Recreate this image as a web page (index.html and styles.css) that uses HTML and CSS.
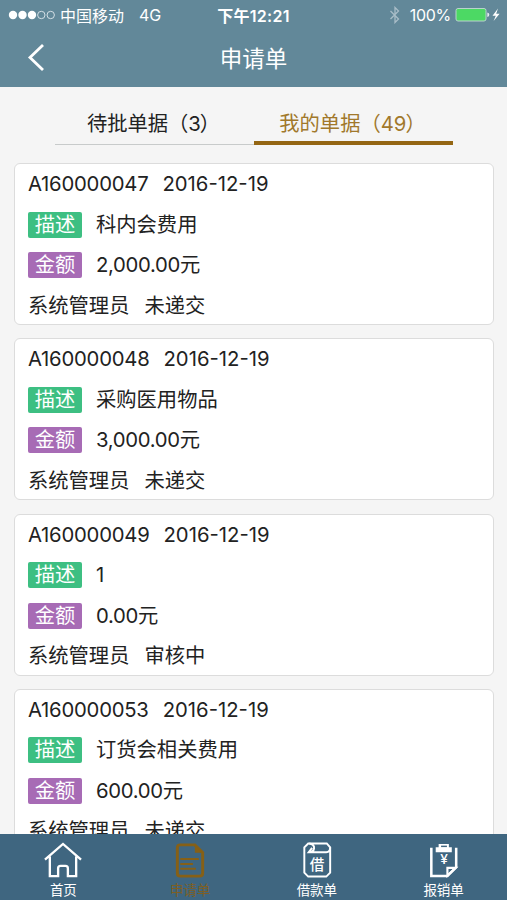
FILE: index.html
```html
<!DOCTYPE html>
<html lang="zh-CN">

<head>
  <meta charset="UTF-8">
  <meta name="viewport" content="width=device-width, initial-scale=1.0">
  <title>申请单</title>
  <link rel="stylesheet" href="styles.css">
</head>

<body>
  <header>
    <div class="status">
      <div class="carrier">
        <svg width="48" height="12" viewBox="0 0 48 12">
          <g fill="#fff">
            <circle cx="5" cy="6" r="4.2" />
            <circle cx="14.5" cy="6" r="4.2" />
            <circle cx="24" cy="6" r="4.2" />
          </g>
          <g fill="none" stroke="#d3dfe5">
            <circle cx="33.3" cy="6" r="3.7" />
            <circle cx="42.7" cy="6" r="3.7" />
          </g>
        </svg>
        <span class="operator">中国移动</span>
        <span class="network">4G</span>
      </div>
      <div class="time">下午12:21</div>
      <div class="power">
        <svg class="bluetooth" width="12" height="18" viewBox="0 0 12 18">
          <path d="M1.5 5l8 8L6 16.500v-15L9.500 5l-8 8" fill="none" stroke="#a9bdc8" stroke-width="1.3" />
        </svg>
        <span class="percent">100%</span>
        <svg width="46" height="16" viewBox="0 0 46 16">
          <rect x="1" y="1.5" width="30" height="12.5" rx="2" fill="#4cd964" stroke="#b9d3cd" />
          <path d="M32.3 5.5q2 .5 2 2.3t-2 2.3z" fill="#e4edf0" />
          <path d="M43 1.5l-5.5 7.2h3.3L38.6 14l6-7.2h-3.4z" fill="#fff" />
        </svg>
      </div>
    </div>
    <div class="title-bar">
      <a class="back" href="#">
        <svg width="18" height="28" viewBox="0 0 18 28">
          <path d="M16 2L3 14.500l13 12.500" fill="none" stroke="#fff" stroke-width="2.8" />
        </svg>
      </a>
      <h1>申请单</h1>
    </div>
  </header>

  <main>
    <div class="tabs">
      <a class="tab" href="#">待批单据（<span class="count">3</span>）</a>
      <a class="tab active" href="#">我的单据（<span class="count">49</span>）</a>
    </div>

    <div class="list">
      <div class="card">
        <div class="row"><span class="number">A160000047</span><span>2016-12-19</span></div>
        <div class="row"><span class="tag desc">描述</span><span>科内会费用</span></div>
        <div class="row"><span class="tag amount">金额</span><span class="money">2,000.00元</span></div>
        <div class="row"><span class="owner">系统管理员</span><span>未递交</span></div>
      </div>
      <div class="card">
        <div class="row"><span class="number">A160000048</span><span>2016-12-19</span></div>
        <div class="row"><span class="tag desc">描述</span><span>采购医用物品</span></div>
        <div class="row"><span class="tag amount">金额</span><span class="money">3,000.00元</span></div>
        <div class="row"><span class="owner">系统管理员</span><span>未递交</span></div>
      </div>
      <div class="card">
        <div class="row"><span class="number">A160000049</span><span>2016-12-19</span></div>
        <div class="row"><span class="tag desc">描述</span><span>1</span></div>
        <div class="row"><span class="tag amount">金额</span><span class="money">0.00元</span></div>
        <div class="row"><span class="owner">系统管理员</span><span>审核中</span></div>
      </div>
      <div class="card">
        <div class="row"><span class="number">A160000053</span><span>2016-12-19</span></div>
        <div class="row"><span class="tag desc">描述</span><span>订货会相关费用</span></div>
        <div class="row"><span class="tag amount">金额</span><span class="money">600.00元</span></div>
        <div class="row"><span class="owner">系统管理员</span><span>未递交</span></div>
      </div>
    </div>
  </main>

  <nav>
    <a href="#">
      <svg width="40" height="40" viewBox="0 0 40 40">
        <path d="M1.5 19L20 3l18.500 16M6.500 16v20H15v-8q0-2.500 2.500-2.500h5q2.500 0 2.500 2.500v8h8.500V16" fill="none" stroke="#fff" stroke-width="2.4" />
      </svg>
      <span>首页</span>
    </a>
    <a class="active" href="#">
      <svg width="40" height="40" viewBox="0 0 40 40">
        <path d="M10 4h15l8 8v21q0 3-3 3H10q-3 0-3-3V7q0-3 3-3z" fill="none" stroke="#866016" stroke-width="3" />
        <path d="M25 4v8h8z" fill="#866016" />
        <path d="M10 18.500h19M10 23.500h13M10 28.500h16" fill="none" stroke="#866016" stroke-width="2" />
      </svg>
      <span>申请单</span>
    </a>
    <a href="#">
      <svg width="40" height="40" viewBox="0 0 40 40">
        <g fill="none" stroke="#fff" stroke-width="2">
          <path d="M11 2.500h19l3.500 4v26l-4 4H11l-4-4v-26z" />
          <path d="M12 2.500q5.500 1 5 5-.5 4-5.500 4L15 7M11.500 11.500h18q4 0 4-4.500" />
        </g>
        <text class="glyph" x="20" y="30" font-size="15">借</text>
      </svg>
      <span>借款单</span>
    </a>
    <a href="#">
      <svg width="40" height="40" viewBox="0 0 40 40">
        <path d="M7 7v29h16.500l9-9V7" fill="none" stroke="#fff" stroke-width="2.6" />
        <path d="M23.500 35.500v-8H32z" fill="none" stroke="#fff" stroke-width="2.2" />
        <path d="M11.500 11.500v-5h3V3H25v3.500h3v5z" fill="#fff" />
        <path d="M17 5.500h6" stroke="#3f6680" stroke-width="1.5" />
        <text class="glyph" x="20" y="24" font-size="14">¥</text>
      </svg>
      <span>报销单</span>
    </a>
  </nav>
</body>

</html>
```
FILE: styles.css
```css
body {
  display: flex;
  flex-direction: column;
  height: 100vh;
  margin: 0;
  overflow: hidden;
  background-color: #f5f5f5;
  color: #222;
  font-family: Inter, "Noto Sans CJK SC", sans-serif;
  font-size: 20.3px;
}

a {
  color: inherit;
  text-decoration: none;
}

svg {
  display: block;
}

header {
  height: 87px;
  flex: none;
  background-color: #628899;
  color: white;
}

.status {
  display: grid;
  grid-template-columns: 1fr auto 1fr;
  align-items: center;
  height: 29px;
  padding: 0 6px 0 8px;
  font-size: 16px;
}

.carrier,
.power {
  display: flex;
  align-items: center;
}

.power {
  justify-content: flex-end;
}

.operator {
  margin-left: 4px;
}

.network {
  margin-left: 15px;
}

.time {
  padding-right: 2px;
  font-weight: 600;
  font-size: 16px;
  letter-spacing: 0.3px;
}

.percent {
  margin: 0 4px 0 9px;
  letter-spacing: -0.3px;
}

.title-bar {
  display: grid;
  grid-template-columns: 60px 1fr 60px;
  align-items: center;
  height: 56px;
}

.back {
  padding-left: 27px;
}

h1 {
  margin: 0;
  font-size: 22.5px;
  font-weight: 400;
  text-align: center;
}

main {
  flex: 1;
  min-height: 0;
  overflow: hidden;
}

.tabs {
  display: flex;
  margin: 14px 54px 18px 55px;
}

.tab {
  flex: 1;
  box-sizing: border-box;
  height: 44px;
  padding-right: 2px;
  line-height: 46px;
  border-bottom: 1px solid #c8cbcb;
  text-align: center;
  white-space: nowrap;
}

.tab.active {
  border-bottom: 4px solid #946613;
  color: #a1782b;
}

.count {
  margin-right: -1px;
}

.list {
  display: flex;
  flex-direction: column;
  gap: 13.3px;
  padding: 0 13px 0 14px;
}

.card {
  flex: none;
  box-sizing: border-box;
  height: 162px;
  border: 1px solid #dcdcdc;
  border-radius: 6px;
  padding: 0 13px;
  background-color: #fff;
}

.row {
  display: flex;
  align-items: center;
  height: 40.5px;
  line-height: 26px;
  white-space: nowrap;
}

.row span {
  margin-top: -0.5px;
}

.number {
  margin-right: 14px;
  letter-spacing: -0.23px;
}

.money {
  letter-spacing: -0.3px;
}

.owner {
  margin-right: 15px;
}

.tag {
  width: 54px;
  height: 26px;
  margin-right: 14px;
  border-radius: 2px;
  color: #fff;
  text-align: center;
}

.desc {
  background-color: #3dbf82;
}

.amount {
  background-color: #a76bb5;
}

nav {
  display: flex;
  flex: none;
  height: 66px;
  background-color: #3f6680;
  color: #fff;
}

nav a {
  display: flex;
  flex: 1;
  flex-direction: column;
  align-items: center;
  padding-top: 7px;
  font-size: 13.5px;
  line-height: 20px;
}

nav .active {
  color: #7d5f25;
}

.glyph {
  fill: #fff;
  font-weight: 500;
  text-anchor: middle;
}
```
